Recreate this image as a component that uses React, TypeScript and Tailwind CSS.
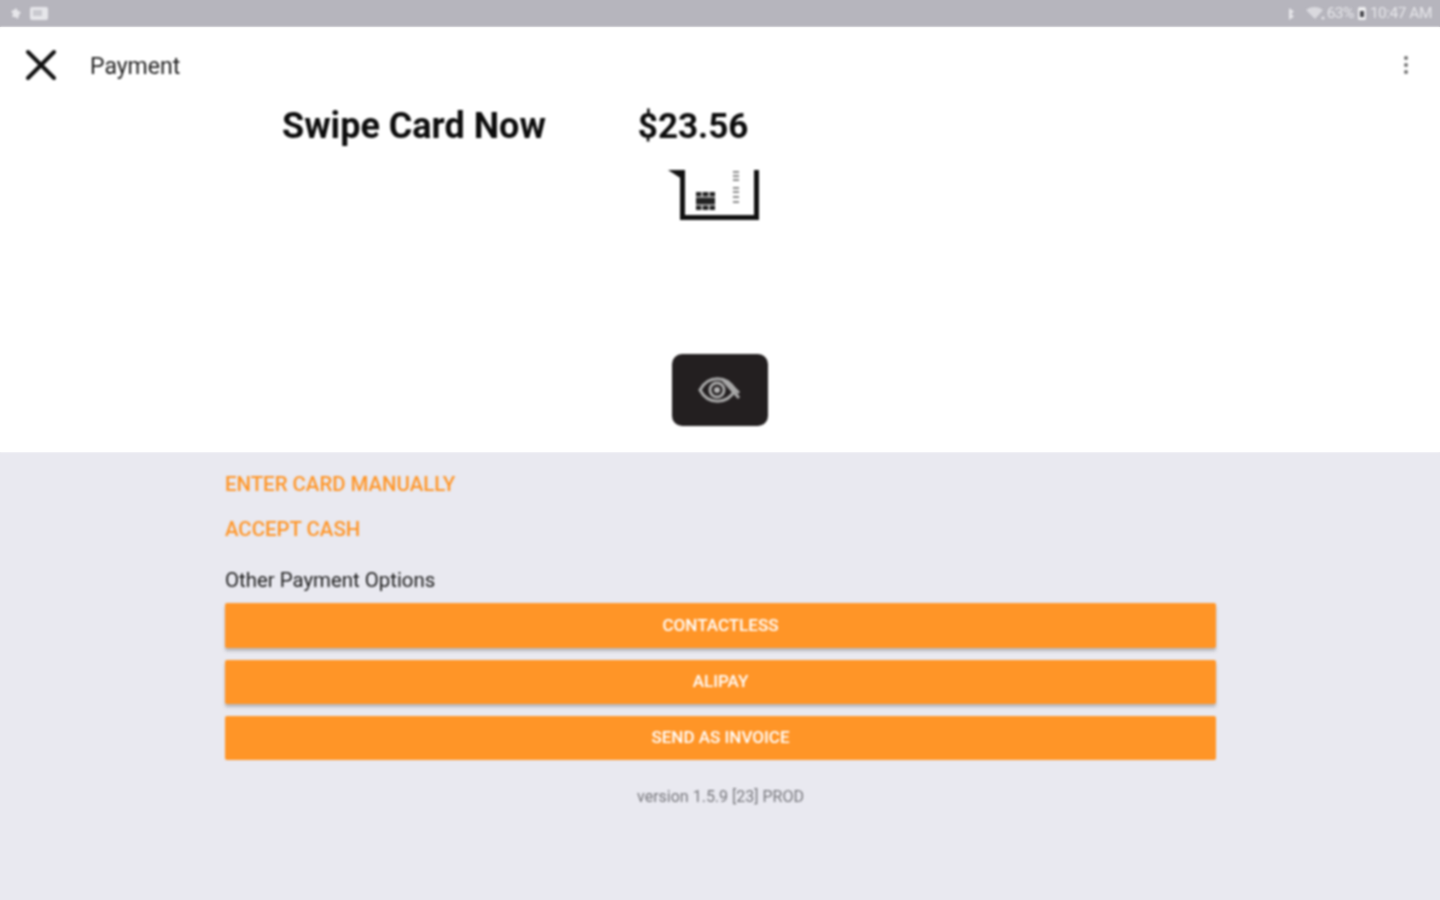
const font = "font-['Roboto',_sans-serif]";

const StatusBar = () => (
  <div className="h-[27px] bg-[#b6b5bd] shadow-[0_1px_2px_rgba(0,0,0,0.12)] flex items-center justify-between pl-[9px] pr-[8px] text-[#e6e6ea]">
    <div className="flex items-center gap-[6px] blur-[1px]">
      <svg width="14" height="14" viewBox="0 0 14 14" fill="currentColor">
        <path d="M7 1l2 3 3 1-2 3-1 4-3-2-3 0 1-3-2-3 3-1z" />
      </svg>
      <svg width="20" height="15" viewBox="0 0 20 15" fill="none">
        <rect x="1" y="1" width="18" height="13" rx="2" fill="currentColor" />
        <rect x="4" y="4" width="9" height="6" fill="#b6b5bd" opacity="0.6" />
      </svg>
    </div>
    <div className="flex items-center text-[15.5px] tracking-[-0.5px] leading-none blur-[1px]">
      <svg width="10" height="14" viewBox="0 0 10 14" fill="currentColor" className="mr-[10px]">
        <path d="M3 1l5 3.500-3 2.500 3 2.500-5 3.500z" />
      </svg>
      <svg width="20" height="15" viewBox="0 0 20 15" fill="currentColor" className="mr-[1px]">
        <path d="M0 4c5-4 12-4 17 0l-8 9z" opacity="0.75" />
        <circle cx="17" cy="12" r="1.500" />
      </svg>
      <span>63%</span>
      <svg width="10" height="15" viewBox="0 0 10 15" className="mx-[3px]">
        <rect x="1" y="1" width="8" height="13" rx="1.500" fill="#eeeef0" />
        <rect x="3" y="5" width="4" height="6" fill="#4a4a50" />
      </svg>
      <span>10:47 AM</span>
    </div>
  </div>
);

const Toolbar = () => (
  <div className="h-[74px] pt-[2px] flex items-center pl-[25px] pr-[32px] bg-white blur-[0.8px]">
    <svg width="32" height="32" viewBox="0 0 32 32" fill="none" stroke="#111111" strokeWidth="4" strokeLinecap="round">
      <path d="M3 3l26 26M29 3L3 29" />
    </svg>
    <span className="ml-[33px] mt-[5px] text-[23px] text-[#1f1f1f]">Payment</span>
    <div className="ml-auto flex flex-col gap-[3px]">
      <span className="w-[4px] h-[4px] rounded-full bg-[#707070]" />
      <span className="w-[4px] h-[4px] rounded-full bg-[#707070]" />
      <span className="w-[4px] h-[4px] rounded-full bg-[#707070]" />
    </div>
  </div>
);

const ReaderIcon = () => (
  <svg width="96" height="50" viewBox="0 0 96 50" fill="none" className="block">
    <path d="M2 0h14v9z" fill="#111111" />
    <path d="M16.500 0v47.500h74V0" stroke="#111111" strokeWidth="5" />
    <rect x="30" y="22" width="19" height="18" fill="#222222" />
    <path d="M30 27h19M30 35h19M36 22v5M43 22v5M36 35v5M43 35v5" stroke="#ffffff" strokeWidth="1.200" />
    <path d="M67 2h6M67 6h6M67 10h6M67 18h6M67 22h6M67 27h6M67 32h6" stroke="#8a8a8a" strokeWidth="2" />
  </svg>
);

const ContactlessPad = () => (
  <div className="w-[96px] h-[72px] rounded-[10px] bg-[#231f20] flex items-center justify-center">
    <svg width="46" height="32" viewBox="0 0 46 32" fill="none" stroke="#a8a8a8" strokeWidth="3">
      <path d="M3 16c8-15 27-15 35 0-8 15-27 15-35 0z" />
      <circle cx="20" cy="16" r="7" />
      <circle cx="20" cy="16" r="3" fill="#b5b5b5" stroke="none" />
      <path d="M26 6l16 18M30 7l12 12" />
    </svg>
  </div>
);

const OrangeButton = ({ label, className }: { label: string; className: string }) => (
  <button className={`w-full rounded-[2px] bg-[#ff9527] text-white text-[17px] font-medium ${className}`}>
    {label}
  </button>
);

export default function App() {
  return (
    <div className={`w-[1440px] h-[900px] overflow-hidden flex flex-col bg-white ${font}`}>
      <StatusBar />
      <Toolbar />

      <div className="h-[351px] bg-white flex flex-col items-center blur-[0.8px]">
        <div className="flex items-baseline w-full h-[50px] pt-[2px] text-[#0c0c0c] font-bold">
          <span className="ml-[282px] text-[36px] leading-[46px]">Swipe Card Now</span>
          <span className="ml-[92px] text-[35px] leading-[46px]">$23.56</span>
        </div>
        <div className="mt-[19px] mr-[12px]">
          <ReaderIcon />
        </div>
        <div className="mt-[134px]">
          <ContactlessPad />
        </div>
      </div>

      <div className="flex-1 bg-[#e9e9f0] pl-[225px] pr-[224px]">
        <div className="blur-[0.8px]">
          <div className="mt-[20px] text-[20.4px] leading-[24px] font-medium text-[#ff9527]">ENTER CARD MANUALLY</div>
          <div className="mt-[21px] text-[20.4px] leading-[24px] font-medium text-[#ff9527]">ACCEPT CASH</div>
          <div className="mt-[27px] text-[20.4px] leading-[24px] text-[#1c1c1c]">Other Payment Options</div>
          <div className="mt-[11px] flex flex-col gap-[12px]">
            <OrangeButton label="CONTACTLESS" className="h-[45px] shadow-[0_3px_3px_rgba(90,90,90,0.35)]" />
            <OrangeButton label="ALIPAY" className="h-[44px] shadow-[0_3px_3px_rgba(90,90,90,0.35)]" />
            <OrangeButton label="SEND AS INVOICE" className="h-[44px]" />
          </div>
          <div className="mt-[27px] text-center text-[16px] leading-[20px] text-[#77777c]">version 1.5.9 [23] PROD</div>
        </div>
      </div>
    </div>
  );
}
